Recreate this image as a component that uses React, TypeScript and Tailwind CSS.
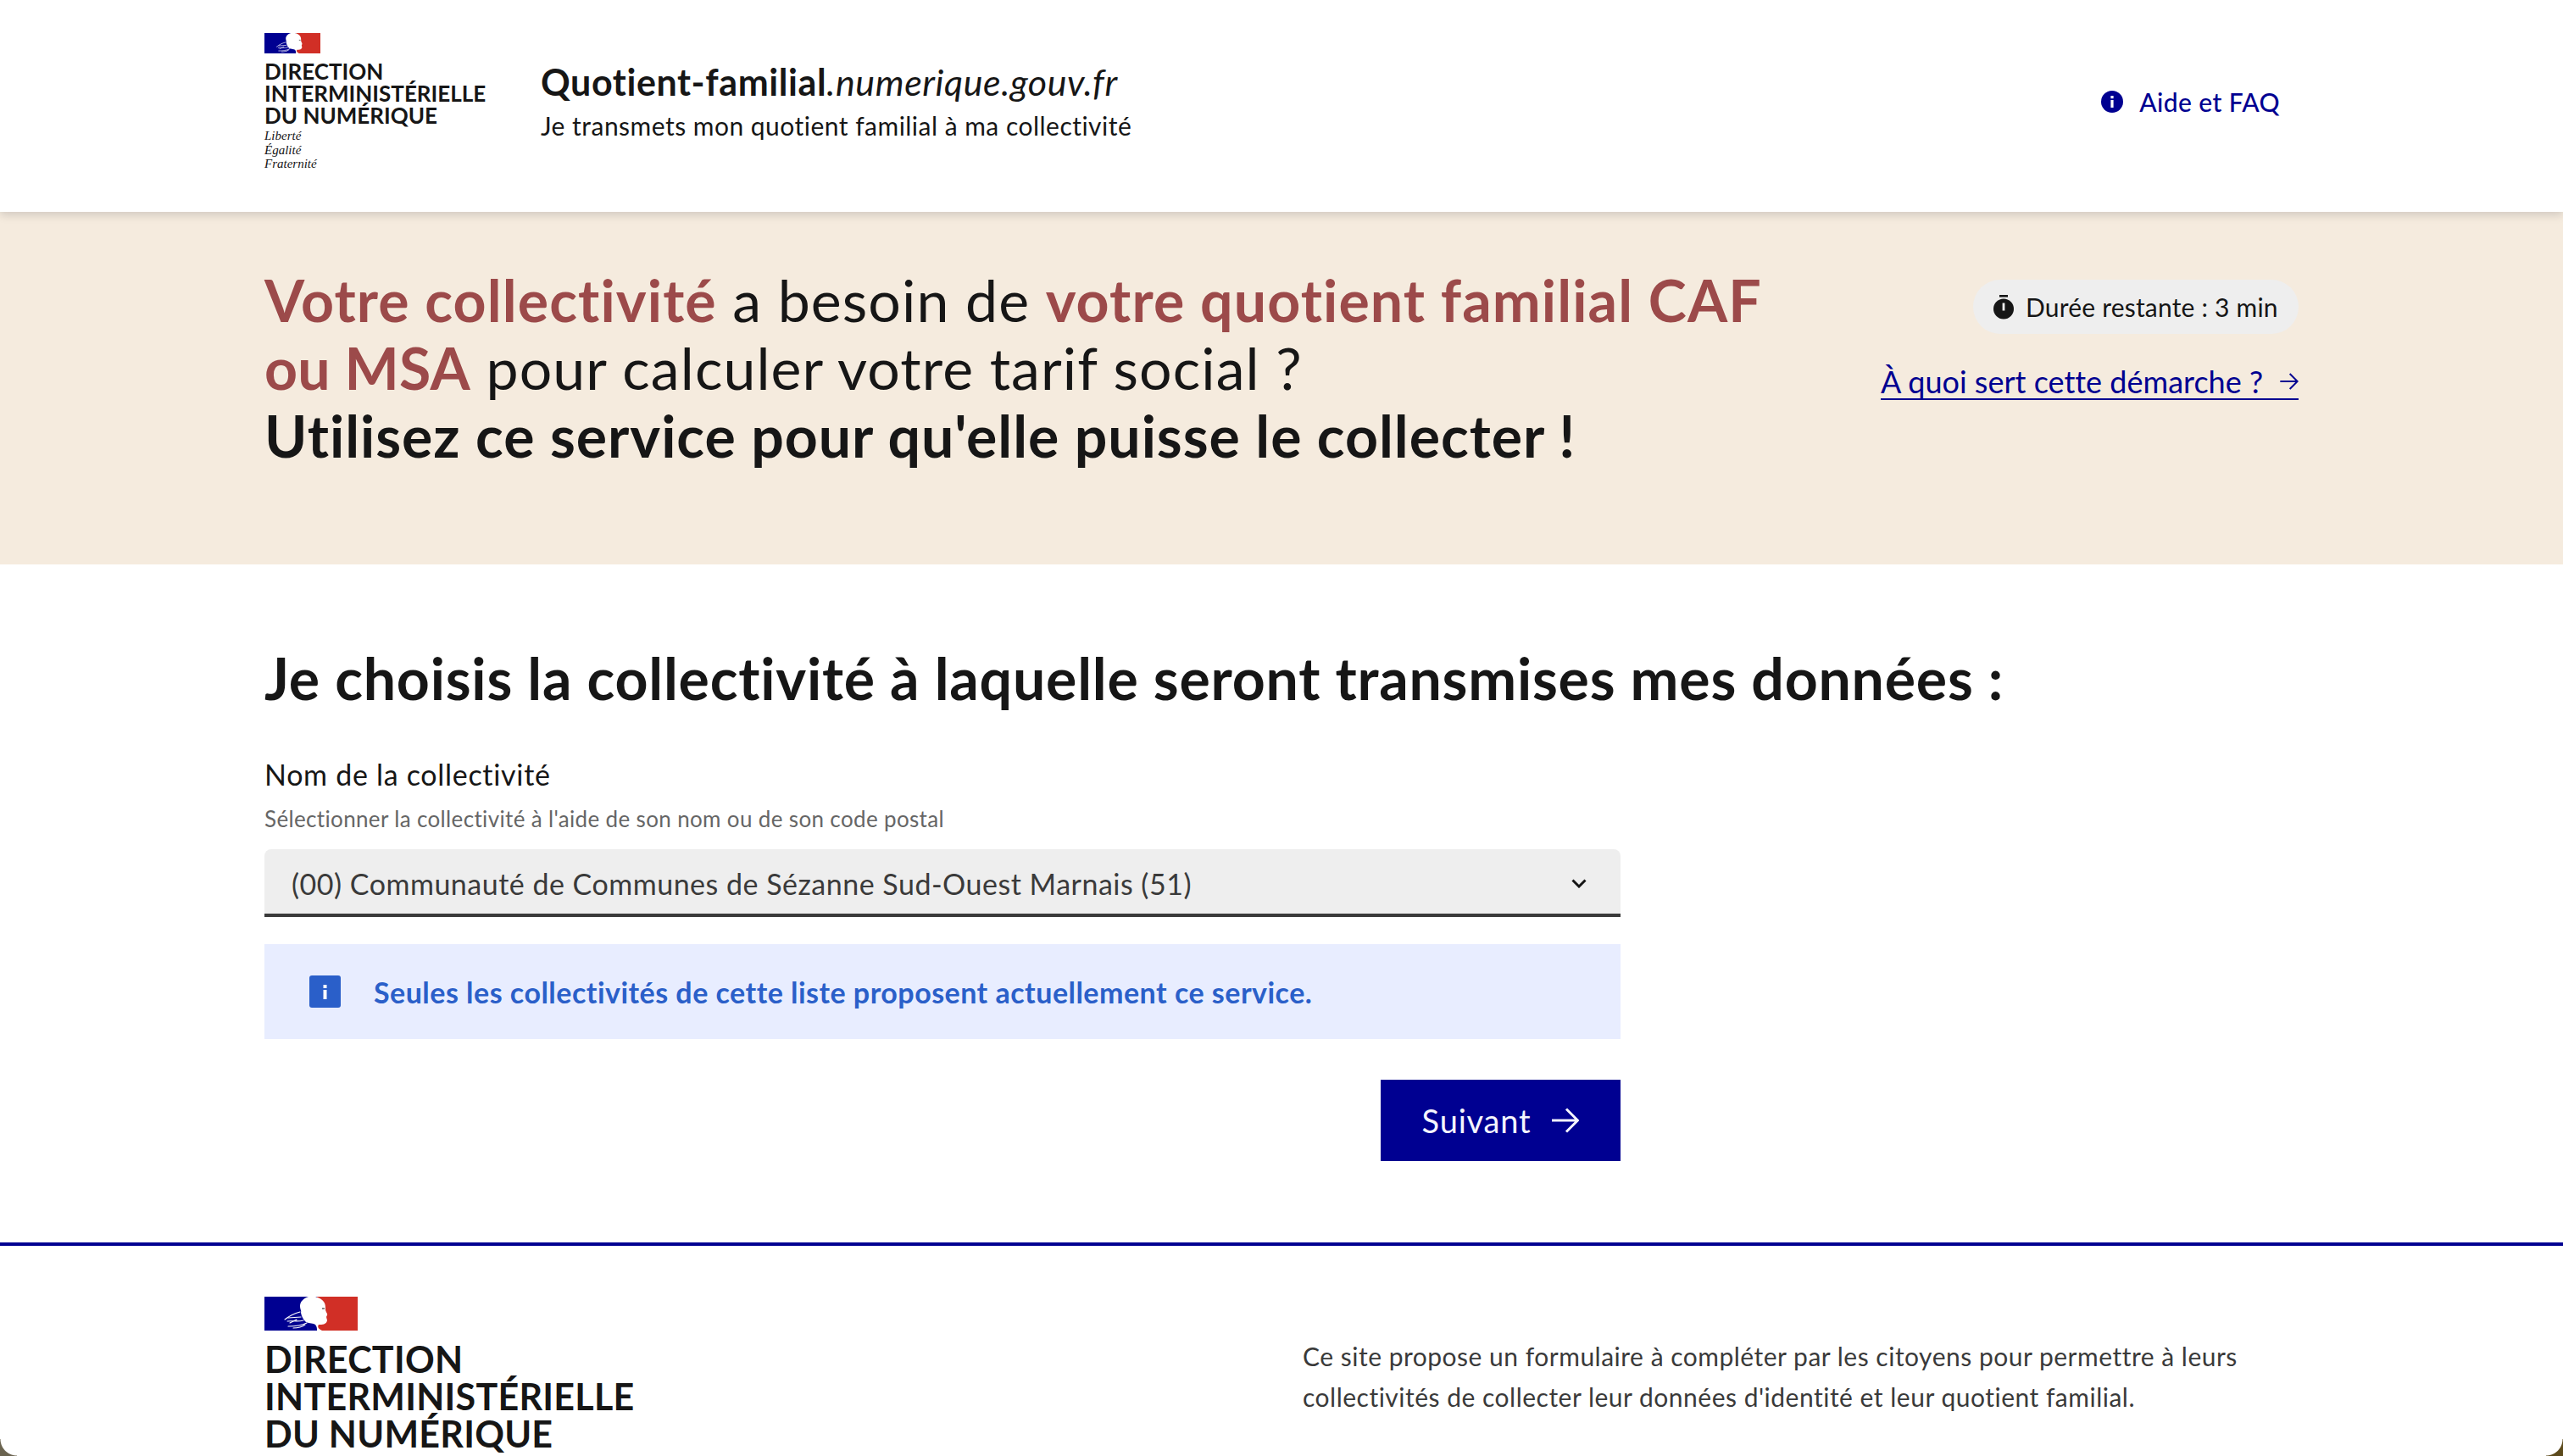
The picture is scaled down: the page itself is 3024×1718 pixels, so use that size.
function Marianne({ className }: { className: string }) {
  return (
    <svg viewBox="0 0 110 40" className={className}>
      <rect width="62" height="40" fill="#000091" />
      <rect x="62" width="48" height="40" fill="#d12f26" />
      {/* head */}
      <path
        d="M52 0C46 2 42 6 42 11C42 15 44 17 43 19C44 24 46 27 49 30C53 32 58 31 60 33C62 35 62 38 62 40H68C64 38 62 36 64 33C68 33 73 33 74 28C74 26 72 24 74 22C75 20 72 18 72 15C72 11 72 9 70 6C68 3 64 1 60 0Z"
        fill="#fff"
      />
      {/* hair/hand strokes */}
      <g fill="none" stroke="#fff" strokeWidth="1.1" strokeLinecap="round">
        <path d="M24 27C29 23 34 20 42 18" />
        <path d="M28 25L43 24" />
        <path d="M27 29C33 28 38 30 46 28" />
        <path d="M30 31L38 27" />
        <path d="M28 35C35 35 42 35 50 31" />
        <path d="M34 37C39 37 44 36 48 33" />
      </g>
      <path d="M68 13L71 13L71 15L68 15Z" fill="#888" />
    </svg>
  );
}

function TimerIcon() {
  return (
    <svg viewBox="0 0 24 29" className="h-[29px] w-6 shrink-0" fill="#161616">
      <rect x="7" y="0" width="10" height="2.6" />
      <circle cx="12" cy="16.5" r="12" />
      <rect x="10.6" y="9.5" width="2.8" height="9" fill="#eeeeee" />
    </svg>
  );
}

function Arrow({ className }: { className: string }) {
  return (
    <svg viewBox="0 0 32 30" className={className} fill="none" stroke="currentColor" strokeWidth="3">
      <path d="M0 15H30M17 1.5L30.5 15L17 28.5" />
    </svg>
  );
}

export default function App() {
  return (
    <div className="relative h-[1718px] overflow-hidden bg-white font-['Lato',sans-serif] text-[#161616] [font-variant-ligatures:none]">
      <header className="relative z-10 flex h-[250px] items-start justify-between bg-white pl-[312px] pr-[334px] shadow-[0_4px_10px_rgba(0,0,18,0.14)]">
        <div className="flex items-start">
          <div className="w-[326px] pt-[39px]">
            <Marianne className="h-6 w-[66px]" />
            <p className="mt-[8px] text-[26px] leading-[26px] font-bold">
              DIRECTION
              <br />
              INTERMINISTÉRIELLE
              <br />
              DU NUMÉRIQUE
            </p>
            <p className="mt-[3px] font-['Liberation_Serif',serif] text-[15px] leading-[16.5px] italic">
              Liberté
              <br />
              Égalité
              <br />
              Fraternité
            </p>
          </div>
          <div className="pt-[72px]">
            <p className="text-[43px] leading-[50px] font-bold tracking-[0.6px]">
              Quotient-familial
              <span className="font-normal italic">.numerique.gouv.fr</span>
            </p>
            <p className="mt-[2px] text-[30px] leading-[48px] tracking-[0.48px]">
              Je transmets mon quotient familial à ma collectivité
            </p>
          </div>
        </div>
        <a className="mt-[100px] flex items-center gap-[19px] text-[30px] leading-10 font-medium tracking-[0.4px] text-[#000091]">
          <svg viewBox="0 0 26 26" className="h-[26px] w-[26px]">
            <circle cx="13" cy="13" r="13" fill="#000091" />
            <rect x="11.4" y="6" width="3.2" height="3.2" fill="#fff" />
            <rect x="11.4" y="11" width="3.2" height="9" fill="#fff" />
          </svg>
          Aide et FAQ
        </a>
      </header>

      <section className="flex h-[416px] items-start justify-between bg-[#f5ebde] px-[312px] pt-[64px]">
        <h1 className="text-[68px] leading-[80px] font-normal tracking-[1.1px]">
          <span className="font-bold text-[#9c4a4a]">Votre collectivité</span> a besoin de{" "}
          <span className="font-bold text-[#9c4a4a]">votre quotient familial CAF</span>
          <br />
          <span className="font-bold tracking-[0.2px] text-[#9c4a4a]">ou MSA</span> pour calculer votre tarif social ?
          <br />
          <span className="font-bold tracking-[0.95px]">Utilisez ce service pour qu'elle puisse le collecter !</span>
        </h1>
        <div className="flex flex-col items-end pt-[16px]">
          <div className="flex h-16 w-[384px] items-center gap-[14px] rounded-full bg-[#eeeeee] pl-6 text-[30px] tracking-[0.2px]">
            <TimerIcon />
            Durée restante : 3 min
          </div>
          <a className="mt-9 flex items-center gap-[20px] border-b-2 border-[#000091] text-[36px] leading-10 text-[#000091]">
            À quoi sert cette démarche ?
            <Arrow className="h-5 w-[22px]" />
          </a>
        </div>
      </section>

      <main className="h-[800px] pl-[312px] pt-[94px]">
        <h2 className="text-[68px] leading-[80px] font-bold tracking-[0.76px]">
          Je choisis la collectivité à laquelle seront transmises mes données :
        </h2>
        <div className="mt-[50px] w-[1600px]">
          <label className="block text-[34px] leading-[48px] tracking-[0.7px]">Nom de la collectivité</label>
          <p className="mt-2 text-[26px] leading-10 tracking-[0.35px] text-[#666666]">
            Sélectionner la collectivité à l'aide de son nom ou de son code postal
          </p>
          <div className="mt-4 flex h-20 items-center justify-between rounded-t-lg border-b-4 border-[#3a3a3a] bg-[#eeeeee] pl-8 pr-[40px] pt-1 text-[34px] tracking-[0.5px] text-[#3a3a3a]">
            (00) Communauté de Communes de Sézanne Sud-Ouest Marnais (51)
            <svg viewBox="0 0 18 11" className="h-[11px] w-[18px] text-[#161616]" fill="none" stroke="currentColor" strokeWidth="3">
              <path d="M1.5 1.5L9 9L16.5 1.5" />
            </svg>
          </div>
          <div className="mt-8 flex h-[112px] items-center gap-[39px] bg-[#e8edff] pl-[53px] text-[34px] font-bold tracking-[0.48px] text-[#2a5fc9]">
            <span className="flex h-[38px] w-[37px] items-center justify-center rounded-[3px] bg-[#2a5fc9] text-white">
              <svg viewBox="0 0 37 38" className="h-[38px] w-[37px]">
                <rect x="16.5" y="11" width="4" height="4" fill="#fff" />
                <rect x="16.5" y="17" width="4" height="11" fill="#fff" />
              </svg>
            </span>
            Seules les collectivités de cette liste proposent actuellement ce service.
          </div>
          <div className="mt-12 flex justify-end">
            <button className="flex h-24 w-[283px] items-center justify-center gap-[25px] bg-[#000091] text-[38px] tracking-[0.8px] text-[#f5f5fe]">
              Suivant
              <Arrow className="h-[30px] w-8" />
            </button>
          </div>
        </div>
      </main>

      <footer className="absolute inset-x-0 top-[1466px] flex h-[300px] items-start border-t-4 border-[#000091] pl-[312px]">
        <div className="w-[1225px] pt-[60px]">
          <Marianne className="h-10 w-[110px]" />
          <p className="mt-[12px] text-[43px] leading-[44px] font-bold tracking-[0.25px]">
            DIRECTION
            <br />
            INTERMINISTÉRIELLE
            <br />
            DU NUMÉRIQUE
          </p>
        </div>
        <p className="pt-[106px] text-[30px] leading-[48px] tracking-[0.5px] text-[#3a3a3a]">
          Ce site propose un formulaire à compléter par les citoyens pour permettre à leurs
          <br />
          collectivités de collecter leur données d'identité et leur quotient familial.
        </p>
      </footer>

      {/* window corners */}
      <div className="absolute bottom-0 left-0 h-5 w-5 bg-[radial-gradient(circle_at_100%_0,transparent_19px,#6b6450_20px)]" />
      <div className="absolute bottom-0 right-0 h-5 w-5 bg-[radial-gradient(circle_at_0_0,transparent_19px,#5c4a1c_20px)]" />
    </div>
  );
}
